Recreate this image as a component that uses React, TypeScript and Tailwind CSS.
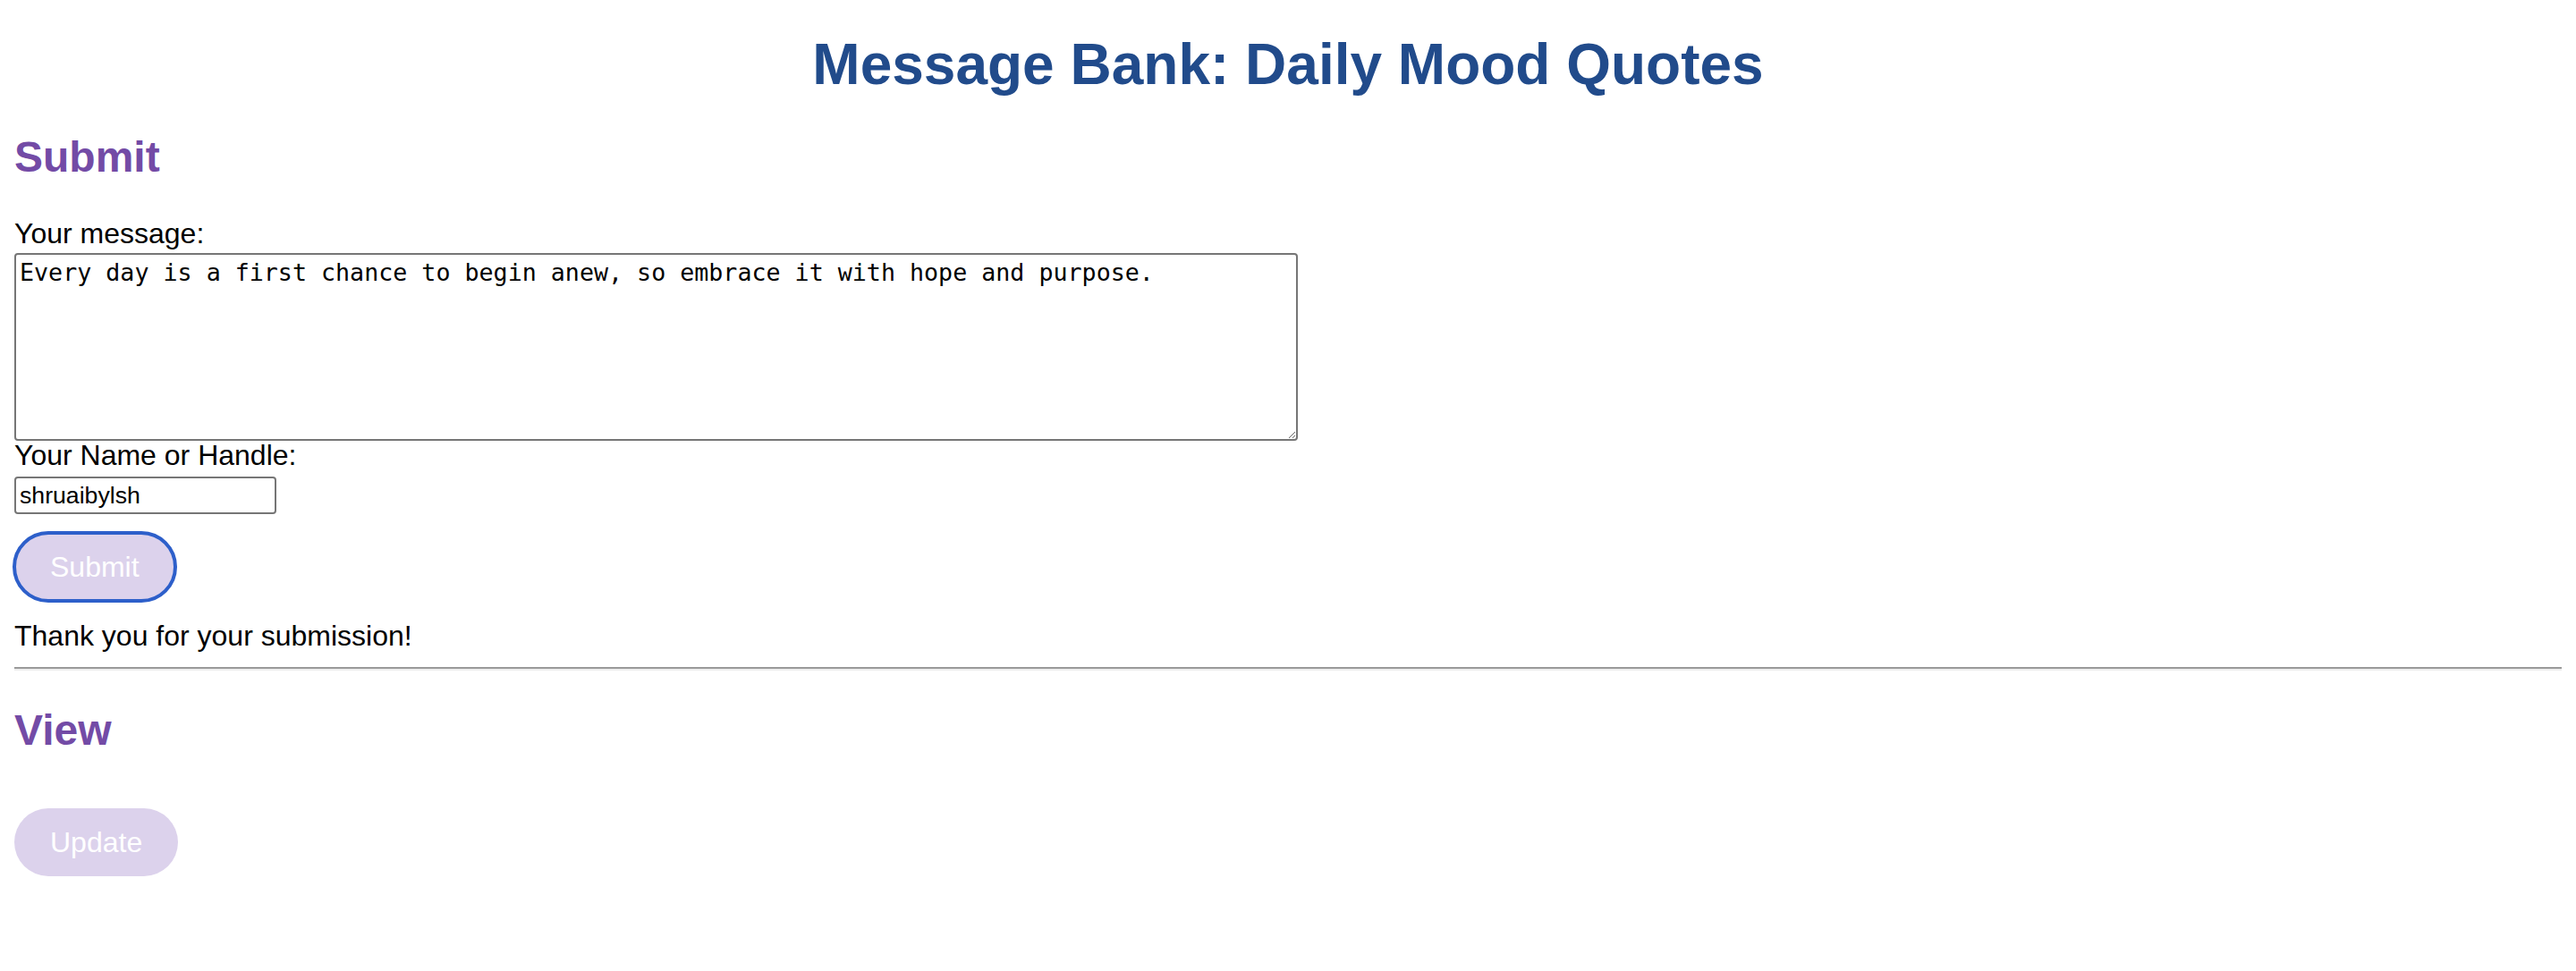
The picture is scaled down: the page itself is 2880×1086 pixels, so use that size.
import React from 'react';

export default function App() {
    return (
        <div className="min-h-screen w-full bg-white px-[16px] font-['Liberation_Sans',Arial,sans-serif] text-black">
            {/* Page title */}
            <h1 className="pt-[35px] text-center text-[64px] font-bold leading-[74px] text-[#214b8b]">
                Message Bank: Daily Mood Quotes
            </h1>

            {/* Submit section */}
            <h2 className="mt-[39px] text-[48px] font-bold leading-[56px] text-[#734ba6]">Submit</h2>

            <form className="flex flex-col items-start" onSubmit={(e) => e.preventDefault()}>
                <label htmlFor="msg" className="mt-[39px] text-[32px] leading-[37px]">
                    Your message:
                </label>
                <textarea
                    id="msg"
                    defaultValue="Every day is a first chance to begin anew, so embrace it with hope and purpose."
                    className="mt-[3px] block h-[210px] w-[1435px] resize rounded-[4px] border-2 border-[#767676] px-[4px] pt-[4px] font-['DejaVu_Sans_Mono',monospace] text-[26.67px] leading-[31px]"
                />
                <label htmlFor="handle" className="text-[32px] leading-[32px]">
                    Your Name or Handle:
                </label>
                <input
                    id="handle"
                    type="text"
                    defaultValue="shruaibylsh"
                    className="mt-[8px] h-[42px] w-[293px] rounded-[4px] border-2 border-[#767676] px-[4px] text-[26.67px]"
                />
                <button
                    type="submit"
                    className="mt-[21px] h-[76px] rounded-full bg-[#dcd2ec] px-[40px] text-[32px] text-white outline-[4px] outline-offset-[-2px] outline-solid outline-[#2d5fca]"
                >
                    Submit
                </button>
            </form>

            <p className="mt-[21px] text-[32px] leading-[37px]">Thank you for your submission!</p>

            <hr className="mt-[16px] border-0 border-t-2 border-b-2 border-t-[#9a9a9a] border-b-[#eeeeee]" />

            {/* View section */}
            <h2 className="mt-[39px] text-[48px] font-bold leading-[56px] text-[#734ba6]">View</h2>

            <button
                type="button"
                className="mt-[59px] h-[76px] rounded-full bg-[#dcd2ec] px-[40px] text-[32px] text-white"
            >
                Update
            </button>
        </div>
    );
}
